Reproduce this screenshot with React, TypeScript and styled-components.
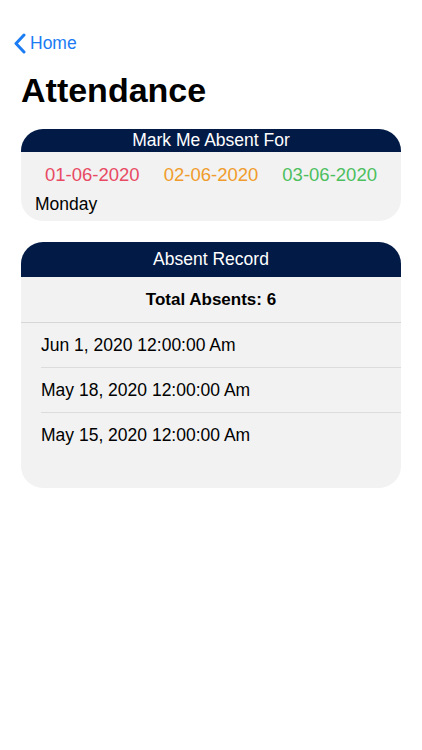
import React from "react";
import styled, { createGlobalStyle } from "styled-components";

const GlobalStyle = createGlobalStyle`
  body {
    margin: 0;
    background: #fff;
    font-family: "Liberation Sans", Arial, sans-serif;
    color: #000;
  }
`;

const Page = styled.div`
  width: 422px;
  min-height: 750px;
  display: flex;
  flex-direction: column;
`;

const NavBar = styled.div`
  height: 22px;
  margin-top: 32px;
  display: flex;
  align-items: center;
  gap: 4px;
  padding-left: 13px;
  color: #1b7cf3;
  font-size: 17.5px;
`;

const Title = styled.h1`
  margin: 16px 0 0 21px;
  height: 40px;
  line-height: 40px;
  font-size: 34px;
  font-weight: 700;
`;

const Card = styled.div<{ $gap: number }>`
  margin: ${({ $gap }) => $gap}px 21px 0;
  width: 380px;
  background: #f2f2f2;
  border-radius: 22px;
  overflow: hidden;
  display: flex;
  flex-direction: column;
`;

const CardHeader = styled.div<{ $h: number }>`
  height: ${({ $h }) => $h}px;
  background: #021a46;
  color: #fff;
  font-size: 17.5px;
  display: flex;
  align-items: center;
  justify-content: center;
`;

const DateRow = styled.div`
  display: flex;
  justify-content: space-evenly;
  margin-top: 11px;
  height: 24px;
  align-items: center;
`;

const DateText = styled.span<{ $color: string }>`
  color: ${({ $color }) => $color};
  font-size: 18.5px;
`;

const DayText = styled.div`
  margin: 5px 0 5px 14px;
  height: 24px;
  line-height: 24px;
  font-size: 17.5px;
`;

const Total = styled.div`
  height: 45px;
  display: flex;
  align-items: center;
  justify-content: center;
  font-size: 17px;
  font-weight: 700;
  border-bottom: 1px solid #d6d6d6;
`;

const RecordList = styled.div`
  padding-bottom: 30px;
`;

const Record = styled.div<{ $last?: boolean }>`
  margin-left: 20px;
  height: 44px;
  display: flex;
  align-items: center;
  font-size: 17.5px;
  border-bottom: 1px solid ${({ $last }) => ($last ? "transparent" : "#dcdcdc")};
`;

const dates = [
  { label: "01-06-2020", color: "#e84a63" },
  { label: "02-06-2020", color: "#f09c2c" },
  { label: "03-06-2020", color: "#4cbf5e" },
];

const records = [
  "Jun 1, 2020 12:00:00 Am",
  "May 18, 2020 12:00:00 Am",
  "May 15, 2020 12:00:00 Am",
];

const App = () => {
  return (
    <Page>
      <GlobalStyle />
      <NavBar>
        <svg width="13" height="21" viewBox="0 0 13 21">
          <path d="M11 2 L3 10.5 L11 19" fill="none" stroke="#1b7cf3" strokeWidth="3" strokeLinecap="round" strokeLinejoin="round" />
        </svg>
        Home
      </NavBar>
      <Title>Attendance</Title>
      <Card $gap={19}>
        <CardHeader $h={23}>Mark Me Absent For</CardHeader>
        <DateRow>
          {dates.map((d) => (
            <DateText key={d.label} $color={d.color}>{d.label}</DateText>
          ))}
        </DateRow>
        <DayText>Monday</DayText>
      </Card>
      <Card $gap={21}>
        <CardHeader $h={35}>Absent Record</CardHeader>
        <Total>Total Absents: 6</Total>
        <RecordList>
          {records.map((r, i) => (
            <Record key={r} $last={i === records.length - 1}>{r}</Record>
          ))}
        </RecordList>
      </Card>
    </Page>
  );
};

export default App;
